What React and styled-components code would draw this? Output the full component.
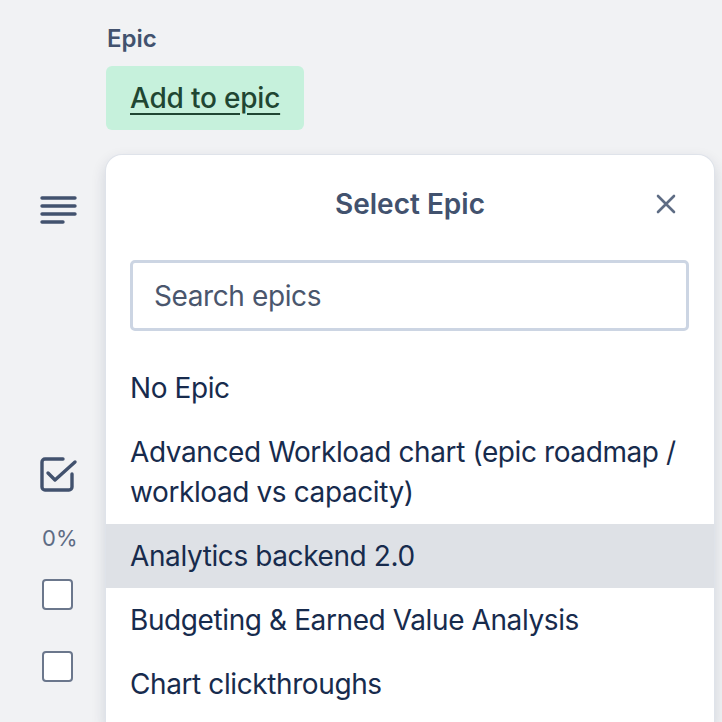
import React from "react";
import styled, { createGlobalStyle } from "styled-components";

const Global = createGlobalStyle`
  html, body { margin: 0; padding: 0; background: #f1f2f4; }
  body { font-family: Inter, "Noto Sans", sans-serif; -webkit-font-smoothing: antialiased; }
  * { box-sizing: border-box; }
`;

const Page = styled.div`
  display: flex;
  height: 722px;
  width: 722px;
  overflow: hidden;
  background: #f1f2f4;
`;

const Rail = styled.div`
  width: 106px;
  flex: none;
  display: flex;
  flex-direction: column;
  align-items: flex-start;
  padding-left: 40px;
`;

const RailSlot = styled.div`
  margin-top: ${(p) => p.$gap}px;
  margin-left: ${(p) => p.$indent || 0}px;
  display: flex;
`;

const Percent = styled.div`
  font-size: 22px;
  line-height: 24px;
  color: #5e6c84;
  padding-left: 2px;
`;

const Box = styled.div`
  width: 31px;
  height: 31px;
  border: 2.5px solid #6b778c;
  border-radius: 4px;
  background: #fff;
`;

const Main = styled.div`
  width: 608px;
  flex: none;
  display: flex;
  flex-direction: column;
  align-items: flex-start;
  padding-top: 23px;
`;

const Label = styled.div`
  font-size: 24px;
  line-height: 32px;
  font-weight: 600;
  color: #42526e;
  padding-left: 1px;
`;

const AddButton = styled.button`
  margin-top: 11px;
  height: 64px;
  padding: 0 24px;
  border: none;
  border-radius: 6px;
  background: #c6f1dc;
  color: #1f4632;
  font-family: inherit;
  font-size: 28px;
  font-weight: 500;
  line-height: 64px;
  letter-spacing: -0.2px;
  text-decoration: underline;
  text-underline-offset: 5px;
  text-decoration-thickness: 2px;
  cursor: pointer;
`;

const Popover = styled.div`
  margin-top: 25px;
  width: 608px;
  flex: 1;
  background: #fff;
  border-radius: 16px 16px 0 0;
  box-shadow: 0 0 0 1px #dfe3ea, 0 6px 14px 2px rgba(9, 30, 66, 0.12);
  display: flex;
  flex-direction: column;
`;

const Header = styled.div`
  position: relative;
  padding-top: 29px;
  display: flex;
  justify-content: center;
`;

const Title = styled.h2`
  margin: 0;
  font-size: 28px;
  line-height: 40px;
  font-weight: 600;
  color: #42526e;
`;

const Close = styled.button`
  position: absolute;
  top: 39px;
  right: 38px;
  width: 20px;
  height: 20px;
  padding: 0;
  border: none;
  background: none;
  display: flex;
  cursor: pointer;
`;

const Search = styled.input`
  margin: 36px 25px 0 24px;
  height: 71px;
  border: 3px solid #ccd5e3;
  border-radius: 5px;
  padding: 0 21px;
  font-family: inherit;
  font-size: 28px;
  letter-spacing: -0.4px;
  color: #172b4d;
  outline: none;
  &::placeholder { color: #4a566d; }
`;

const List = styled.ul`
  list-style: none;
  margin: 25px 0 0;
  padding: 0;
`;

const Item = styled.li`
  padding: 12px 24px;
  font-size: 28px;
  line-height: 40px;
  color: #172b4d;
  letter-spacing: -0.4px;
  background: ${(p) => (p.$active ? "#dee1e6" : "transparent")};
`;

const MenuIcon = () => (
  <svg width="38" height="30" viewBox="0 0 38 30" fill="none" stroke="#42526e" strokeWidth="3.4" strokeLinecap="round">
    <path d="M2 3H35M2 11H35M2 19H35M2 27H23" />
  </svg>
);

const CheckIcon = () => (
  <svg width="40" height="40" viewBox="0 0 40 40" fill="none" stroke="#42526e" strokeWidth="3.4" strokeLinecap="round" strokeLinejoin="round">
    <path d="M32 18V31a3 3 0 0 1-3 3H5a3 3 0 0 1-3-3V6a3 3 0 0 1 3-3H23" />
    <path d="M8 17L15 24L35 6" />
  </svg>
);

const XIcon = () => (
  <svg width="20" height="20" viewBox="0 0 20 20" fill="none" stroke="#5e6c84" strokeWidth="2.6" strokeLinecap="round">
    <path d="M2 2L18 18M18 2L2 18" />
  </svg>
);

const epics = [
  "No Epic",
  "Advanced Workload chart (epic roadmap / workload vs capacity)",
  "Analytics backend 2.0",
  "Budgeting & Earned Value Analysis",
  "Chart clickthroughs",
];

export default function App() {
  return (
    <>
      <Global />
      <Page>
        <Rail>
          <RailSlot $gap={195}>
            <MenuIcon />
          </RailSlot>
          <RailSlot $gap={231}>
            <CheckIcon />
          </RailSlot>
          <RailSlot $gap={30}>
            <Percent>0%</Percent>
          </RailSlot>
          <RailSlot $gap={29} $indent={2}>
            <Box />
          </RailSlot>
          <RailSlot $gap={41} $indent={2}>
            <Box />
          </RailSlot>
        </Rail>
        <Main>
          <Label>Epic</Label>
          <AddButton>Add to epic</AddButton>
          <Popover>
            <Header>
              <Title>Select Epic</Title>
              <Close aria-label="Close">
                <XIcon />
              </Close>
            </Header>
            <Search placeholder="Search epics" />
            <List>
              {epics.map((e, i) => (
                <Item key={e} $active={i === 2}>
                  {e}
                </Item>
              ))}
            </List>
          </Popover>
        </Main>
      </Page>
    </>
  );
}
